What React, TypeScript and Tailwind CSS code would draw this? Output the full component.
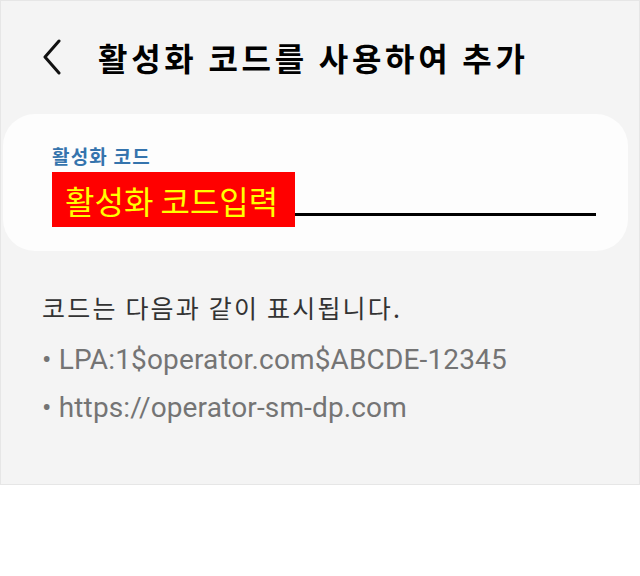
const KR = '"Noto Sans CJK KR", "Noto Sans", sans-serif';
const LATIN = 'Roboto, "Noto Sans CJK KR", sans-serif';

function BackIcon() {
  return (
    <svg width="20" height="36" viewBox="0 0 20 36" fill="none">
      <polyline
        points="17,2 3,18 17,34"
        stroke="#111"
        strokeWidth="3"
        strokeLinecap="round"
        strokeLinejoin="round"
      />
    </svg>
  );
}

export default function App() {
  return (
    <div className="w-[640px] h-[576px] bg-white">
      <div className="h-[485px] bg-[#f4f4f4] border border-[#e6e6e6] flex flex-col">
        <div className="flex items-center mt-[38px] pl-[41px] h-[36px]">
          <BackIcon />
          <h1
            className="ml-[36px] text-[32px] font-bold text-black leading-none tracking-[3.7px]"
            style={{ fontFamily: KR }}
          >
            활성화 코드를 사용하여 추가
          </h1>
        </div>

        <div className="mt-[39px] ml-[2px] mr-[11px] h-[137px] rounded-[32px] bg-[#fdfdfd] pl-[49px] pr-[32px] pt-[32px]">
          <div
            className="text-[19px] font-bold text-[#3574ad] leading-none tracking-[1.2px]"
            style={{ fontFamily: KR }}
          >
            활성화 코드
          </div>
          <div className="flex items-start mt-[7px]">
            <div
              className="bg-[#ff0000] text-[#ffff00] text-[32px] leading-none h-[55px] w-[243px] flex items-center pl-[13px]"
              style={{ fontFamily: KR }}
            >
              활성화 코드입력
            </div>
            <div className="flex-1 h-[3px] bg-black mt-[41px]" />
          </div>
        </div>

        <div className="pl-[41px] pt-[44px]">
          <p
            className="text-[25px] text-[#333] leading-none tracking-[2.2px]"
            style={{ fontFamily: KR }}
          >
            코드는 다음과 같이 표시됩니다.
          </p>
          <ul
            className="mt-[26px] text-[28px] text-[#747474] leading-none tracking-[0.15px] flex flex-col gap-[20px]"
            style={{ fontFamily: LATIN }}
          >
            <li>• LPA:1$operator.com$ABCDE-12345</li>
            <li>• https://operator-sm-dp.com</li>
          </ul>
        </div>
      </div>
    </div>
  );
}
